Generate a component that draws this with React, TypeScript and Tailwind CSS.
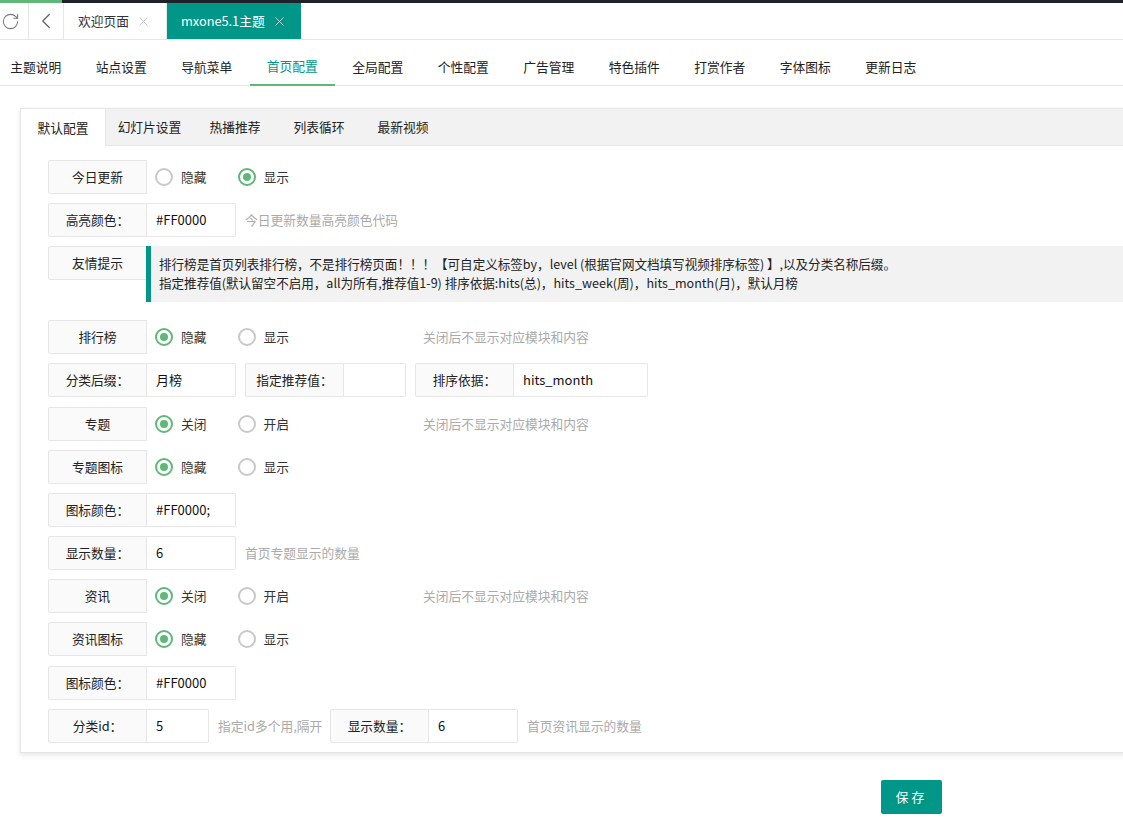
import React from "react";
import { RotateCw, ChevronLeft, X } from "lucide-react";

const Label = ({ children, w = "w-[99px]" }: { children: React.ReactNode; w?: string }) => (
  <div className={`${w} h-[34px] shrink-0 flex items-center justify-center border border-[#e6e6e6] bg-[#fafafa] rounded-l-[2px] text-[#222]`}>
    {children}
  </div>
);

const Field = ({ label, value, w }: { label: string; value?: string; w: string }) => (
  <div className="flex shrink-0">
    <Label>{label}</Label>
    <div className={`${w} h-[34px] border border-l-0 border-[#e6e6e6] rounded-r-[2px] bg-white flex items-center pl-[9px] text-[13px] text-[#111]`}>{value}</div>
  </div>
);

const Radio = ({ label, on, w = "w-[82.5px]" }: { label: string; on?: boolean; w?: string }) => (
  <div className={`${w} flex items-center shrink-0`}>
    <span className={`w-[18px] h-[18px] rounded-full border-2 flex items-center justify-center ${on ? "border-[#5fb878]" : "border-[#c9c9c9]"}`}>
      {on && <span className="w-[8px] h-[8px] rounded-full bg-[#5fb878]" />}
    </span>
    <span className="ml-[8px] text-[#333]">{label}</span>
  </div>
);

const Hint = ({ children, className = "" }: { children: React.ReactNode; className?: string }) => (
  <div className={`text-[#aaa] whitespace-nowrap ${className}`}>{children}</div>
);

const RadioRow = ({ label, a, b, first, hint, mb = "mb-[9px]" }: { label: string; a: string; b: string; first?: boolean; hint?: boolean; mb?: string }) => (
  <div className={`flex items-center h-[34px] ${mb}`}>
    <Label>{label}</Label>
    <div className="ml-[8px] flex items-center">
      <Radio label={a} on={first} />
      <Radio label={b} on={!first} />
    </div>
    {hint && <Hint className="ml-[103px]">关闭后不显示对应模块和内容</Hint>}
  </div>
);

const topTabs = ["主题说明", "站点设置", "导航菜单", "首页配置", "全局配置", "个性配置", "广告管理", "特色插件", "打赏作者", "字体图标", "更新日志"];
const innerTabs = ["幻灯片设置", "热播推荐", "列表循环", "最新视频"];

export default function App() {
  return (
    <div className="w-[1123px] h-[824px] overflow-hidden bg-white text-[12.75px] leading-[20px] text-[#333] font-['Noto_Sans_CJK_SC','Microsoft_YaHei',sans-serif]">
      <div className="h-[3px] bg-[#20222a]">
        <div className="w-[62px] h-full bg-[#5fb878]" />
      </div>

      <div className="h-[37px] flex items-stretch border-b border-[#e6e6e6] text-[#333]">
        <div className="w-[29px] flex items-center justify-center border-r border-[#e6e6e6]">
          <RotateCw size={19} strokeWidth={1.3} className="text-[#777] -ml-[7px]" />
        </div>
        <div className="w-[35px] flex items-center justify-center border-r border-[#e6e6e6]">
          <ChevronLeft size={26} strokeWidth={1.2} className="text-[#666]" />
        </div>
        <div className="w-[103px] flex items-center pl-[14px] border-r border-[#e6e6e6]">
          欢迎页面
          <X size={15} className="ml-[7px] text-[#c2c2c2]" strokeWidth={1.3} />
        </div>
        <div className="w-[134px] flex items-center pl-[14px] bg-[#009688] text-white">
          mxone5.1主题
          <X size={15} className="ml-[7px] text-[#d5e8e5]" strokeWidth={1.3} />
        </div>
      </div>

      <div className="h-[46px] flex border-b border-[#e6e6e6] -ml-[7px]">
        {topTabs.map((t) => (
          <div
            key={t}
            className={`w-[85.5px] h-[46px] shrink-0 flex items-center justify-center pt-[8px] ${t === "首页配置" ? "text-[#009688] border-b-2 border-[#5fb878]" : "text-[#222]"}`}
          >
            {t}
          </div>
        ))}
      </div>

      <div className="mt-[22px] ml-[20px] w-[1140px] h-[645px] bg-white border border-[#e6e6e6] shadow-[0_2px_5px_0_rgba(0,0,0,0.1)]">
        <div className="h-[37px] flex bg-[#f2f2f2] border-b border-[#e6e6e6]">
          <div className="w-[85px] h-[37px] flex items-center justify-center bg-white border-r border-[#e6e6e6] text-[#222]">默认配置</div>
          <div className="flex">
            {innerTabs.map((t, i) => (
              <div key={t} className={`h-full flex items-center justify-center text-[#222] ${i === 0 ? "w-[87px]" : "w-[84px]"}`}>
                {t}
              </div>
            ))}
          </div>
        </div>

        <div className="pl-[27px] pt-[14px]">
          <RadioRow label="今日更新" a="隐藏" b="显示" />

          <div className="flex items-center h-[34px] mb-[9px]">
            <Field label="高亮颜色：" value="#FF0000" w="w-[89px]" />
            <Hint className="ml-[9px]">今日更新数量高亮颜色代码</Hint>
          </div>

          <div className="flex mb-[18px]">
            <Label>友情提示</Label>
            <div className="flex-1 h-[56px] bg-[#f2f2f2] border-l-[5px] border-[#009688] pl-[8px] pt-[8px] text-[12.55px] leading-[19px] text-[#222] whitespace-nowrap -ml-[1px]">
              <div>排行榜是首页列表排行榜，不是排行榜页面！！！【可自定义标签by，level (根据官网文档填写视频排序标签) 】,以及分类名称后缀。</div>
              <div>指定推荐值(默认留空不启用，all为所有,推荐值1-9) 排序依据:hits(总)，hits_week(周)，hits_month(月)，默认月榜</div>
            </div>
          </div>

          <RadioRow label="排行榜" a="隐藏" b="显示" first hint />

          <div className="flex items-center h-[34px] mb-[10px]">
            <Field label="分类后缀：" value="月榜" w="w-[89px]" />
            <div className="ml-[9px]"><Field label="指定推荐值：" w="w-[62px]" /></div>
            <div className="ml-[9px] flex">
              <Label>排序依据：</Label>
              <div className="w-[134px] h-[34px] border border-l-0 border-[#e6e6e6] rounded-r-[2px] flex items-center pl-[9px] text-[13px] text-[#111]">hits_month</div>
            </div>
          </div>

          <RadioRow label="专题" a="关闭" b="开启" first hint />
          <RadioRow label="专题图标" a="隐藏" b="显示" first />
          <div className="mb-[9px]"><Field label="图标颜色：" value="#FF0000;" w="w-[89px]" /></div>

          <div className="flex items-center h-[34px] mb-[9px]">
            <Field label="显示数量：" value="6" w="w-[89px]" />
            <Hint className="ml-[9px]">首页专题显示的数量</Hint>
          </div>

          <RadioRow label="资讯" a="关闭" b="开启" first hint />
          <RadioRow label="资讯图标" a="隐藏" b="显示" first mb="mb-[10px]" />
          <div className="mb-[9px]"><Field label="图标颜色：" value="#FF0000" w="w-[89px]" /></div>

          <div className="flex items-center h-[34px]">
            <Field label="分类id：" value="5" w="w-[62px]" />
            <Hint className="ml-[9px] w-[103px]">指定id多个用,隔开</Hint>
            <div className="ml-[9px]"><Field label="显示数量：" value="6" w="w-[89px]" /></div>
            <Hint className="ml-[9px]">首页资讯显示的数量</Hint>
          </div>
        </div>
      </div>

      <div className="mt-[27px] ml-[881px]">
        <button className="w-[61px] h-[34px] bg-[#009688] text-white rounded-[2px] tracking-[3px] flex items-center justify-center">保存</button>
      </div>
    </div>
  );
}
